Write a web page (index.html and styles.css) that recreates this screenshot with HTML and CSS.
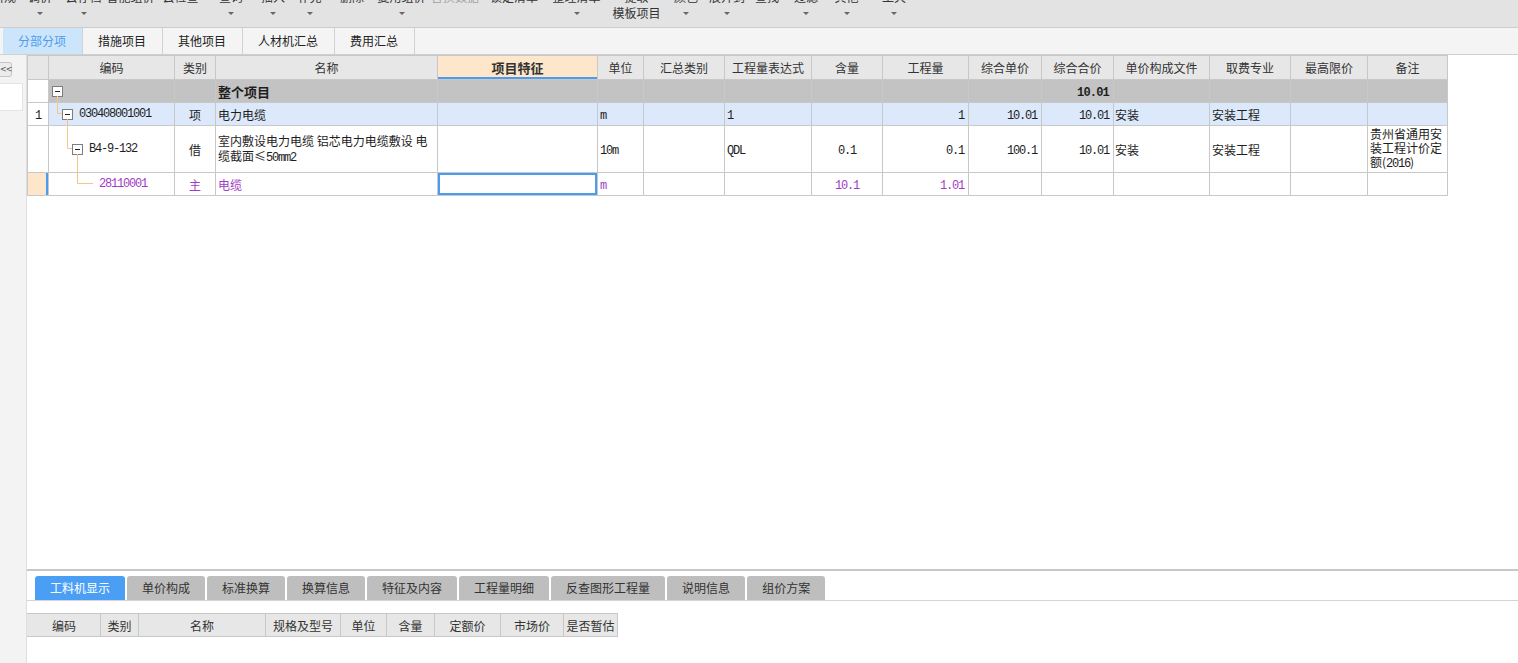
FILE: index.html
```html
<!DOCTYPE html>
<html lang="zh-CN">
<head>
<meta charset="utf-8">
<title>分部分项</title>
<link rel="stylesheet" href="styles.css">
</head>
<body>
<div class="app">
  <div class="toolbar">
    <div class="tb-grid">
      <div class="tb-item"><span class="tb-label">新规</span></div>
      <div class="tb-item"><span class="tb-label">调价</span><span class="tb-sub"><i class="caret"></i></span></div>
      <div class="tb-item"><span class="tb-label">云存档</span><span class="tb-sub"><i class="caret"></i></span></div>
      <div class="tb-item"><span class="tb-label">智能组价</span></div>
      <div class="tb-item"><span class="tb-label">云检查</span></div>
      <div class="tb-item"><span class="tb-label">查询</span><span class="tb-sub"><i class="caret"></i></span></div>
      <div class="tb-item"><span class="tb-label">插入</span><span class="tb-sub"><i class="caret"></i></span></div>
      <div class="tb-item"><span class="tb-label">补充</span><span class="tb-sub"><i class="caret"></i></span></div>
      <div class="tb-item"><span class="tb-label">删除</span></div>
      <div class="tb-item"><span class="tb-label">复用组价</span><span class="tb-sub"><i class="caret"></i></span></div>
      <div class="tb-item"><span class="tb-label dim">替换数据</span></div>
      <div class="tb-item"><span class="tb-label">锁定清单</span></div>
      <div class="tb-item"><span class="tb-label">整理清单</span><span class="tb-sub"><i class="caret"></i></span></div>
      <div class="tb-item"><span class="tb-label">提取</span><span class="tb-sub">模板项目</span></div>
      <div class="tb-item"><span class="tb-label">颜色</span><span class="tb-sub"><i class="caret"></i></span></div>
      <div class="tb-item"><span class="tb-label">展开到</span><span class="tb-sub"><i class="caret"></i></span></div>
      <div class="tb-item"><span class="tb-label">查找</span></div>
      <div class="tb-item"><span class="tb-label">过滤</span><span class="tb-sub"><i class="caret"></i></span></div>
      <div class="tb-item"><span class="tb-label">其他</span><span class="tb-sub"><i class="caret"></i></span></div>
      <div class="tb-item"><span class="tb-label">工具</span><span class="tb-sub"><i class="caret"></i></span></div>
    </div>
  </div>

  <div class="tabbar">
    <div class="tab active">分部分项</div>
    <div class="tab">措施项目</div>
    <div class="tab">其他项目</div>
    <div class="tab">人材机汇总</div>
    <div class="tab">费用汇总</div>
  </div>

  <div class="main">
    <div class="side">
      <div class="collapse">&lt;&lt;</div>
      <div class="side-box"></div>
    </div>

    <div class="content">
      <div class="grid-area">
        <div class="tree-wrap">
          <table class="grid">
            <colgroup>
              <col class="c21"><col class="c126"><col class="c41"><col class="c222"><col class="c160"><col class="c46"><col class="c81"><col class="c87"><col class="c71"><col class="c86"><col class="c73"><col class="c72"><col class="c96"><col class="c81"><col class="c77"><col class="c80">
            </colgroup>
            <thead>
              <tr class="hrow">
                <th></th><th>编码</th><th>类别</th><th>名称</th><th class="hl">项目特征</th><th>单位</th><th>汇总类别</th><th>工程量表达式</th><th>含量</th><th>工程量</th><th>综合单价</th><th>综合合价</th><th>单价构成文件</th><th>取费专业</th><th>最高限价</th><th>备注</th>
              </tr>
            </thead>
            <tbody>
              <tr class="total">
                <td class="rn"></td>
                <td class="code"><div class="tree l0"><span class="mbox"></span></div></td>
                <td></td>
                <td class="name"><b>整个项目</b></td>
                <td></td><td></td><td></td><td></td><td></td><td></td><td></td>
                <td class="r"><span class="a bold">10.01</span></td>
                <td></td><td></td><td></td><td></td>
              </tr>
              <tr class="r1">
                <td class="rn"><span class="a">1</span></td>
                <td class="code"><div class="tree l1"><span class="mbox"></span><span class="a">030408001001</span></div></td>
                <td class="c">项</td>
                <td class="name">电力电缆</td>
                <td></td>
                <td class="l"><span class="a">m</span></td>
                <td></td>
                <td class="l"><span class="a">1</span></td>
                <td></td>
                <td class="r"><span class="a">1</span></td>
                <td class="r"><span class="a">10.01</span></td>
                <td class="r"><span class="a">10.01</span></td>
                <td class="l1p">安装</td>
                <td class="l">安装工程</td>
                <td></td>
                <td></td>
              </tr>
              <tr class="r2">
                <td class="rn"></td>
                <td class="code"><div class="tree l2"><span class="mbox"></span><span class="a">B4-9-132</span></div></td>
                <td class="c">借</td>
                <td class="name wrap">室内敷设电力电缆 铝芯电力电缆敷设 电<br>缆截面≤<span class="a">50mm2</span></td>
                <td></td>
                <td class="l"><span class="a">10m</span></td>
                <td></td>
                <td class="l"><span class="a">QDL</span></td>
                <td class="c"><span class="a">0.1</span></td>
                <td class="r"><span class="a">0.1</span></td>
                <td class="r"><span class="a">100.1</span></td>
                <td class="r"><span class="a">10.01</span></td>
                <td class="l1p">安装</td>
                <td class="l">安装工程</td>
                <td></td>
                <td class="l note">贵州省通用安<br>装工程计价定<br>额(<span class="a">2016</span>)</td>
              </tr>
              <tr class="r3">
                <td class="rn sel"></td>
                <td class="code"><div class="tree l3"><span class="a">28110001</span></div></td>
                <td class="c">主</td>
                <td class="name">电缆</td>
                <td class="focus"></td>
                <td class="l"><span class="a">m</span></td>
                <td></td>
                <td></td>
                <td class="c"><span class="a">10.1</span></td>
                <td class="r"><span class="a">1.01</span></td>
                <td></td><td></td><td></td><td></td><td></td><td></td>
              </tr>
            </tbody>
          </table>
          <svg class="tree-lines" width="120" height="140" viewBox="0 0 120 140">
            <path d="M30.5 41 V58.5 H35 M40.5 64 V93.5 H45 M50.5 99 V128.5 H66" fill="none" stroke="#f5c58c" stroke-width="1"/>
          </svg>
        </div>
      </div>

      <div class="sep"></div>

      <div class="bottom">
        <div class="btabs">
          <div class="btab active">工料机显示</div>
          <div class="btab">单价构成</div>
          <div class="btab">标准换算</div>
          <div class="btab">换算信息</div>
          <div class="btab">特征及内容</div>
          <div class="btab">工程量明细</div>
          <div class="btab">反查图形工程量</div>
          <div class="btab">说明信息</div>
          <div class="btab">组价方案</div>
        </div>
        <table class="subtable">
          <colgroup>
            <col class="s73"><col class="s38"><col class="s127"><col class="s75"><col class="s46"><col class="s48"><col class="s66"><col class="s63"><col class="s54">
          </colgroup>
          <thead>
            <tr>
              <th>编码</th><th>类别</th><th>名称</th><th>规格及型号</th><th>单位</th><th>含量</th><th>定额价</th><th>市场价</th><th>是否暂估</th>
            </tr>
          </thead>
        </table>
      </div>
    </div>
  </div>
</div>
</body>
</html>
```

FILE: styles.css
```css
* { box-sizing: border-box; }

body {
  margin: 0;
  width: 1518px;
  height: 663px;
  overflow: hidden;
  background: #fff;
  font-family: "Noto Sans CJK SC", "Noto Sans", sans-serif;
  font-size: 12px;
  color: #1e1e1e;
}

.app {
  display: flex;
  flex-direction: column;
  height: 663px;
}

/* ---------- toolbar ---------- */
.toolbar {
  height: 28px;
  flex: none;
  background: #e3e3e3;
  border-bottom: 1px solid #cdcdcd;
  overflow: hidden;
}
.tb-grid {
  display: grid;
  grid-template-columns: 32px 40px 47px 47px 53px 48px 36px 37px 48px 51px 56px 62px 63px 57px 42px 40px 40px 38px 43px 52px;
  margin-left: -12px;
}
.tb-item {
  display: flex;
  flex-direction: column;
  align-items: center;
  min-width: 0;
}
.tb-label {
  white-space: nowrap;
  line-height: 14px;
  margin-top: -10px;
  color: #333;
}
.tb-label.dim { color: #a3a3a3; }
.tb-sub {
  height: 14px;
  margin-top: 2px;
  display: flex;
  align-items: center;
  justify-content: center;
  white-space: nowrap;
  line-height: 14px;
  color: #333;
}
.caret {
  display: block;
  width: 0;
  height: 0;
  border-left: 3px solid transparent;
  border-right: 3px solid transparent;
  border-top: 3px solid #666;
}

/* ---------- top tabs ---------- */
.tabbar {
  height: 27px;
  flex: none;
  display: flex;
  padding-left: 3px;
  background: #f4f4f4;
  border-bottom: 1px solid #d0d0d0;
}
.tab {
  padding: 0 16px 0 15px;
  border-right: 1px solid #d2d2d2;
  line-height: 26px;
  color: #222;
}
.tab.active {
  background: #cde5fa;
  color: #4a9df0;
}

/* ---------- main ---------- */
.main {
  flex: 1;
  display: flex;
  min-height: 0;
}
.side {
  width: 27px;
  flex: none;
  background: #f3f3f3;
  border-right: 1px solid #dedede;
  padding-top: 7px;
  display: flex;
  flex-direction: column;
}
.collapse {
  width: 12px;
  height: 15px;
  border: 1px solid #c6c6c6;
  border-left: none;
  border-radius: 0 3px 3px 0;
  background: #ececec;
  font-family: "DejaVu Sans", sans-serif;
  font-size: 8px;
  line-height: 13px;
  letter-spacing: -1px;
  color: #555;
  text-align: center;
}
.side-box {
  margin-top: 6px;
  width: 23px;
  height: 28px;
  background: #fff;
  border: 1px solid #e4e4e4;
  border-left: none;
}

.content {
  flex: 1;
  min-width: 0;
  display: flex;
  flex-direction: column;
}
.grid-area {
  flex: 1;
  min-height: 0;
}
.tree-wrap {
  position: relative;
  width: 1420px;
}

/* ---------- main grid ---------- */
.grid {
  border-collapse: collapse;
  table-layout: fixed;
  width: 1420px;
}
.grid td, .grid th {
  border: 1px solid #c8c8c8;
  padding: 0 2px;
  white-space: nowrap;
  overflow: hidden;
  vertical-align: middle;
}
.grid th {
  background: #e7e7e7;
  font-weight: normal;
  color: #333;
  text-align: center;
}
.grid th.hl {
  background: #fde6c9;
  font-weight: bold;
  font-size: 13px;
  box-shadow: inset 0 -2px 0 #4a9cf0;
}
.hrow { height: 24px; }
.total { height: 23px; }
.r1 { height: 23px; }
.r2 { height: 47px; }
.r3 { height: 23px; }

.c21 { width: 21px; } .c126 { width: 126px; } .c41 { width: 41px; } .c222 { width: 222px; }
.c160 { width: 160px; } .c46 { width: 46px; } .c81 { width: 81px; } .c87 { width: 87px; }
.c71 { width: 71px; } .c86 { width: 86px; } .c73 { width: 73px; } .c72 { width: 72px; }
.c96 { width: 96px; } .c77 { width: 77px; } .c80 { width: 80px; }

.total td { background: #c3c3c3; }
.total td.rn { background: #fff; }
.total .name b { font-size: 13px; }
.r1 td { background: #dce9fb; }
.r1 td.rn { background: #fff; }
.r3 td { color: #a23cc6; }
.rn { text-align: center; }
.rn.sel {
  background: #fde6c9;
  box-shadow: inset -2px 0 0 #4a9cf0;
}
.focus { box-shadow: inset 0 0 0 2px #4a9cf0; }

.c { text-align: center; }
.l { text-align: left; }
.l1p { text-align: left; padding-left: 1px !important; }
.r { text-align: right; padding-right: 4px !important; }
.name { text-align: left; }
.wrap { line-height: 15px; white-space: normal !important; }
.note { line-height: 14px; white-space: normal !important; }

.a {
  font-family: "Liberation Mono", monospace;
  font-size: 12px;
  letter-spacing: -1.2px;
}
.a.bold { font-weight: bold; font-size: 12px; letter-spacing: -0.8px; }

.grid td.code { padding: 0; }
.tree {
  display: flex;
  align-items: center;
  gap: 6px;
}
.tree.l0 { padding-left: 3px; }
.tree.l1 { padding-left: 13px; }
.tree.l2 { padding-left: 23px; }
.tree.l3 { padding-left: 50px; }
.mbox {
  position: relative;
  flex: none;
  width: 11px;
  height: 11px;
  border: 1px solid #7d7d7d;
  background: #fff;
}
.mbox::after {
  content: "";
  position: absolute;
  left: 2px;
  top: 4px;
  width: 5px;
  height: 1px;
  background: #222;
}
.tree-lines {
  position: absolute;
  left: 0;
  top: 0;
  pointer-events: none;
}

/* ---------- bottom panel ---------- */
.sep {
  height: 2px;
  flex: none;
  background: #c8c8c8;
}
.bottom {
  height: 92px;
  flex: none;
  padding-top: 5px;
}
.btabs {
  display: flex;
  gap: 2px;
  height: 25px;
  padding-left: 8px;
  border-bottom: 1px solid #d4d4d4;
}
.btab {
  padding: 0 15px;
  background: #bebebe;
  border-radius: 3px 3px 0 0;
  line-height: 24px;
  color: #333;
}
.btab.active {
  background: #4a9ff5;
  color: #fff;
}
.subtable {
  margin-top: 12px;
  border-collapse: collapse;
  table-layout: fixed;
  width: 590px;
}
.subtable th {
  height: 23px;
  padding: 0;
  background: #e7e7e7;
  border: 1px solid #c8c8c8;
  border-left-color: #e7e7e7;
  font-weight: normal;
  color: #333;
  text-align: center;
}
.subtable th + th { border-left-color: #c8c8c8; }
.s73 { width: 73px; } .s38 { width: 38px; } .s127 { width: 127px; } .s75 { width: 75px; }
.s46 { width: 46px; } .s48 { width: 48px; } .s66 { width: 66px; } .s63 { width: 63px; } .s54 { width: 54px; }
```
